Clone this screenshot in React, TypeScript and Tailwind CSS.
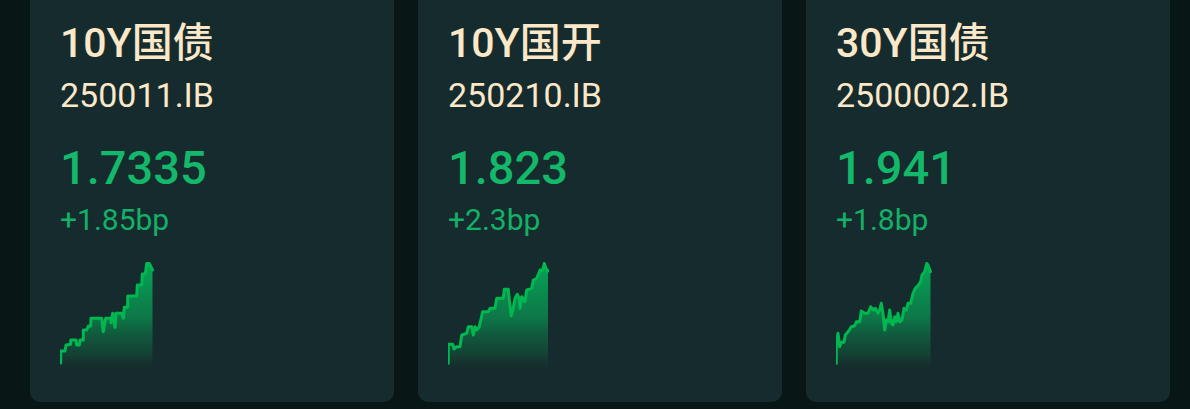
import React from 'react';

type Bond = {
    name: string;
    code: string;
    yieldValue: string;
    change: string;
    points: [number, number][];
};

const bonds: Bond[] = [
    {
        name: '10Y国债',
        code: '250011.IB',
        yieldValue: '1.7335',
        change: '+1.85bp',
        points: [
            [0.7, 101], [0.7, 89], [5, 89], [6, 83], [10.7, 82.3], [10.7, 78], [16, 78], [16.7, 83],
            [19.3, 83], [20, 78], [23.3, 78], [23.3, 68], [26.7, 68], [28.3, 64], [30.7, 64], [31, 56.3],
            [35, 56.3], [41.7, 56.3], [43.3, 69.7], [45.7, 56.3], [50.7, 56.3], [51, 60.7], [52.7, 51.3],
            [55, 65.3], [56, 51.3], [61.7, 51.3], [63.3, 56.3], [64.3, 45.3], [67.7, 45.3], [67.7, 34],
            [76.7, 34], [77.3, 23], [81.7, 23], [82.3, 12], [85.3, 12], [86.7, 1.5], [89.3, 1.5], [92.5, 8],
        ],
    },
    {
        name: '10Y国开',
        code: '250210.IB',
        yieldValue: '1.823',
        change: '+2.3bp',
        points: [
            [0.3, 101.3], [0.3, 82.3], [4.7, 82.3], [6, 87], [8.7, 84.7], [12, 84.7], [13.7, 73], [18.7, 71.3],
            [20.3, 64.7], [23.7, 64.7], [25.3, 73], [27, 64.7], [28.7, 68], [31.3, 64.7], [32, 61.3],
            [34.7, 49.7], [40.3, 49.7], [42, 46.3], [47, 46.3], [48.7, 36.3], [55.3, 36.3], [56.3, 27.3],
            [60.3, 27.3], [61.3, 38], [63.3, 53.7], [65.3, 46.3], [67, 36.3], [69.3, 32.3], [71.3, 36.3],
            [72, 46.3], [73.7, 34.7], [77, 39.7], [78.7, 28], [83.7, 26.3], [85.3, 18], [88.7, 16.3],
            [92, 8], [94.7, 8], [96.3, 1.5], [98, 6.3], [100, 9],
        ],
    },
    {
        name: '30Y国债',
        code: '2500002.IB',
        yieldValue: '1.941',
        change: '+1.8bp',
        points: [
            [0.3, 101.3], [0.3, 80.3], [2, 71.3], [3.7, 84.7], [5.3, 80.3], [8, 80.3], [9.3, 73], [12.7, 69],
            [15.3, 64.7], [18.7, 63.7], [20.3, 59.7], [23.7, 59.7], [25.3, 49], [28.7, 51.3], [32, 51.3],
            [34.7, 44.7], [37, 48], [39.3, 46.3], [42, 51.3], [43.7, 48], [45.3, 41.3], [47, 51.3],
            [48.7, 68], [50.3, 58], [52, 59.7], [53.7, 48], [55.3, 61.3], [57, 63], [58.7, 54.7],
            [60.3, 59.7], [62, 51.3], [63.7, 59.7], [66, 58], [68, 46.3], [70.3, 48], [72, 41.3],
            [74.7, 41.3], [77, 31.3], [79.3, 26.3], [82, 23.7], [84.7, 19.7], [86, 13], [88.7, 9.7],
            [90.7, 1.5], [92, 3], [94.5, 9.7],
        ],
    },
];

const CHART_H = 110;

const Sparkline: React.FC<{ id: string; points: [number, number][] }> = ({ id, points }) => {
    const lastX = points[points.length - 1][0];
    const width = Math.ceil(lastX + 1);
    const line = points.map(([x, y], i) => `${i === 0 ? 'M' : 'L'}${x} ${y}`).join(' ');
    const area = `${line} L${lastX} ${CHART_H} L${points[0][0]} ${CHART_H} Z`;

    return (
        <svg width={width} height={CHART_H} viewBox={`0 0 ${width} ${CHART_H}`} className="block">
            <defs>
                <linearGradient id={id} x1="0" y1="0" x2="0" y2="1">
                    <stop offset="0%" stopColor="#05a556" stopOpacity="1" />
                    <stop offset="50%" stopColor="#0b8a4e" stopOpacity="0.8" />
                    <stop offset="85%" stopColor="#115a3d" stopOpacity="0.45" />
                    <stop offset="100%" stopColor="#162b2d" stopOpacity="0" />
                </linearGradient>
            </defs>
            <path d={area} fill={`url(#${id})`} />
            <path d={line} fill="none" stroke="#00b750" strokeWidth={3} strokeLinejoin="round" strokeLinecap="round" />
        </svg>
    );
};

const BondCard: React.FC<{ bond: Bond; index: number }> = ({ bond, index }) => (
    <div className="-mt-[11px] rounded-[10px] bg-[#162b2d] px-[30px] pt-[30px] pb-[30px]">
        <div className="text-[41px] leading-[48px] font-medium text-[#fbe8c9]">{bond.name}</div>
        <div className="mt-[8px] text-[34px] leading-[40px] text-[#fbe8c9]">{bond.code}</div>
        <div className="mt-[25px] text-[47px] leading-[56px] font-medium text-[#14b86a]">{bond.yieldValue}</div>
        <div className="mt-[6px] text-[30px] leading-[36px] text-[#13b167]">{bond.change}</div>
        <div className="mt-[24px]">
            <Sparkline id={`spark-${index}`} points={bond.points} />
        </div>
    </div>
);

export default function App() {
    return (
        <div className="h-[409px] w-[1190px] overflow-hidden bg-[#081715] pl-[30px] pr-[20px] font-[Roboto,'Noto_Sans_CJK_SC',sans-serif]">
            <div className="grid grid-cols-3 gap-6">
                {bonds.map((bond, i) => (
                    <BondCard key={bond.code} bond={bond} index={i} />
                ))}
            </div>
        </div>
    );
}
